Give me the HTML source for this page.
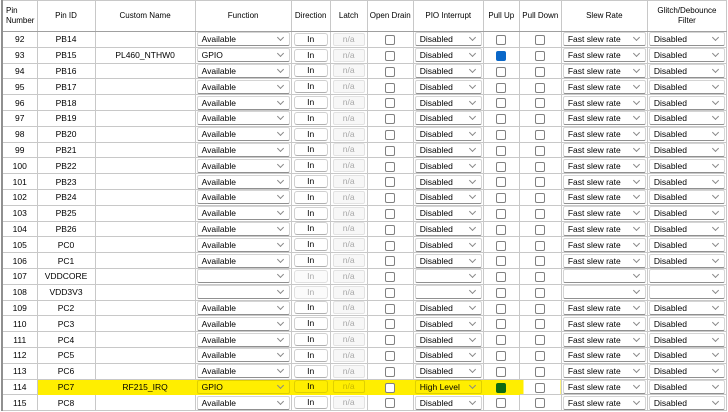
<!DOCTYPE html><html><head><style>
body{margin:0;width:728px;height:412px;overflow:hidden;background:#fff;font-family:"Liberation Sans",sans-serif;font-size:8.5px;color:#000}
table{position:absolute;left:1px;top:0;border-collapse:collapse;table-layout:fixed;width:726px;border-left:2px solid #909090}
td,th{border:1px solid #c8c8c8;padding:0;text-align:center;white-space:nowrap;overflow:hidden;line-height:12px}
td{height:14.8px}
th{font-weight:normal;height:30px;font-size:8px;line-height:10px;border-bottom:1px solid #a0a0a0}
th.l{text-align:left;padding-left:3px}
.d{display:block;margin:0 1px;height:12px;border:1px solid #d4d4d4;border-bottom-color:#909090;border-radius:2px;text-align:left;padding-left:4px;line-height:12px;position:relative;background:#fff}
.d:after{content:"";position:absolute;right:6px;top:2px;width:4px;height:4px;border-right:1px solid #888;border-bottom:1px solid #888;transform:rotate(45deg)}
.b{display:block;margin:0 2px;height:11px;line-height:11px;border:1px solid #d0d0d0;border-bottom-color:#b0b0b0;border-radius:3px;background:#fff}
.g{color:#aaa;border-color:#e0e0e0;background:#fbfbfb}
.n{display:block;margin:0 2px;height:11px;line-height:11px;border:1px solid #e2e2e2;border-radius:2px;background:#f7f7f7;color:#a8a8a8}
.c{display:inline-block;width:8px;height:8px;border:1px solid #808080;border-radius:2px;vertical-align:middle;background:#fff}
.k{background:#0a67c8;border-color:#0a67c8}
.kg{background:#0e6a12;border-color:#0e6a12}
tr.y td.h{background:#ffee00;border-top-color:#ffee00;border-bottom-color:#ffee00;border-left-color:#ffee00;border-right-color:#ffee00}
tr.y td.h .b,tr.y td.h .d,tr.y td.h .n{background:#ffee00;border-color:#e0d000}
tr.y td.h .n{color:#c8b800}
tr.y td.p{background:linear-gradient(to right,#ffee00 4px,#fff 4px)}
</style></head><body>
<table>
<colgroup><col style="width:35px"><col style="width:58px"><col style="width:100px"><col style="width:96px"><col style="width:39px"><col style="width:37px"><col style="width:46px"><col style="width:70px"><col style="width:36px"><col style="width:42px"><col style="width:86px"><col style="width:79px"></colgroup>
<tr><th class="l">Pin<br>Number</th><th>Pin ID</th><th>Custom Name</th><th>Function</th><th>Direction</th><th>Latch</th><th>Open Drain</th><th>PIO Interrupt</th><th>Pull Up</th><th>Pull Down</th><th>Slew Rate</th><th>Glitch/Debounce<br>Filter</th></tr>
<tr><td>92</td><td>PB14</td><td></td><td><span class="d">Available</span></td><td><span class="b">In</span></td><td><span class="n">n/a</span></td><td><span class="c"></span></td><td><span class="d">Disabled</span></td><td><span class="c"></span></td><td><span class="c"></span></td><td><span class="d">Fast slew rate</span></td><td><span class="d">Disabled</span></td></tr>
<tr><td>93</td><td>PB15</td><td>PL460_NTHW0</td><td><span class="d">GPIO</span></td><td><span class="b">In</span></td><td><span class="n">n/a</span></td><td><span class="c"></span></td><td><span class="d">Disabled</span></td><td><span class="c k"></span></td><td><span class="c"></span></td><td><span class="d">Fast slew rate</span></td><td><span class="d">Disabled</span></td></tr>
<tr><td>94</td><td>PB16</td><td></td><td><span class="d">Available</span></td><td><span class="b">In</span></td><td><span class="n">n/a</span></td><td><span class="c"></span></td><td><span class="d">Disabled</span></td><td><span class="c"></span></td><td><span class="c"></span></td><td><span class="d">Fast slew rate</span></td><td><span class="d">Disabled</span></td></tr>
<tr><td>95</td><td>PB17</td><td></td><td><span class="d">Available</span></td><td><span class="b">In</span></td><td><span class="n">n/a</span></td><td><span class="c"></span></td><td><span class="d">Disabled</span></td><td><span class="c"></span></td><td><span class="c"></span></td><td><span class="d">Fast slew rate</span></td><td><span class="d">Disabled</span></td></tr>
<tr><td>96</td><td>PB18</td><td></td><td><span class="d">Available</span></td><td><span class="b">In</span></td><td><span class="n">n/a</span></td><td><span class="c"></span></td><td><span class="d">Disabled</span></td><td><span class="c"></span></td><td><span class="c"></span></td><td><span class="d">Fast slew rate</span></td><td><span class="d">Disabled</span></td></tr>
<tr><td>97</td><td>PB19</td><td></td><td><span class="d">Available</span></td><td><span class="b">In</span></td><td><span class="n">n/a</span></td><td><span class="c"></span></td><td><span class="d">Disabled</span></td><td><span class="c"></span></td><td><span class="c"></span></td><td><span class="d">Fast slew rate</span></td><td><span class="d">Disabled</span></td></tr>
<tr><td>98</td><td>PB20</td><td></td><td><span class="d">Available</span></td><td><span class="b">In</span></td><td><span class="n">n/a</span></td><td><span class="c"></span></td><td><span class="d">Disabled</span></td><td><span class="c"></span></td><td><span class="c"></span></td><td><span class="d">Fast slew rate</span></td><td><span class="d">Disabled</span></td></tr>
<tr><td>99</td><td>PB21</td><td></td><td><span class="d">Available</span></td><td><span class="b">In</span></td><td><span class="n">n/a</span></td><td><span class="c"></span></td><td><span class="d">Disabled</span></td><td><span class="c"></span></td><td><span class="c"></span></td><td><span class="d">Fast slew rate</span></td><td><span class="d">Disabled</span></td></tr>
<tr><td>100</td><td>PB22</td><td></td><td><span class="d">Available</span></td><td><span class="b">In</span></td><td><span class="n">n/a</span></td><td><span class="c"></span></td><td><span class="d">Disabled</span></td><td><span class="c"></span></td><td><span class="c"></span></td><td><span class="d">Fast slew rate</span></td><td><span class="d">Disabled</span></td></tr>
<tr><td>101</td><td>PB23</td><td></td><td><span class="d">Available</span></td><td><span class="b">In</span></td><td><span class="n">n/a</span></td><td><span class="c"></span></td><td><span class="d">Disabled</span></td><td><span class="c"></span></td><td><span class="c"></span></td><td><span class="d">Fast slew rate</span></td><td><span class="d">Disabled</span></td></tr>
<tr><td>102</td><td>PB24</td><td></td><td><span class="d">Available</span></td><td><span class="b">In</span></td><td><span class="n">n/a</span></td><td><span class="c"></span></td><td><span class="d">Disabled</span></td><td><span class="c"></span></td><td><span class="c"></span></td><td><span class="d">Fast slew rate</span></td><td><span class="d">Disabled</span></td></tr>
<tr><td>103</td><td>PB25</td><td></td><td><span class="d">Available</span></td><td><span class="b">In</span></td><td><span class="n">n/a</span></td><td><span class="c"></span></td><td><span class="d">Disabled</span></td><td><span class="c"></span></td><td><span class="c"></span></td><td><span class="d">Fast slew rate</span></td><td><span class="d">Disabled</span></td></tr>
<tr><td>104</td><td>PB26</td><td></td><td><span class="d">Available</span></td><td><span class="b">In</span></td><td><span class="n">n/a</span></td><td><span class="c"></span></td><td><span class="d">Disabled</span></td><td><span class="c"></span></td><td><span class="c"></span></td><td><span class="d">Fast slew rate</span></td><td><span class="d">Disabled</span></td></tr>
<tr><td>105</td><td>PC0</td><td></td><td><span class="d">Available</span></td><td><span class="b">In</span></td><td><span class="n">n/a</span></td><td><span class="c"></span></td><td><span class="d">Disabled</span></td><td><span class="c"></span></td><td><span class="c"></span></td><td><span class="d">Fast slew rate</span></td><td><span class="d">Disabled</span></td></tr>
<tr><td>106</td><td>PC1</td><td></td><td><span class="d">Available</span></td><td><span class="b">In</span></td><td><span class="n">n/a</span></td><td><span class="c"></span></td><td><span class="d">Disabled</span></td><td><span class="c"></span></td><td><span class="c"></span></td><td><span class="d">Fast slew rate</span></td><td><span class="d">Disabled</span></td></tr>
<tr><td>107</td><td>VDDCORE</td><td></td><td><span class="d">&nbsp;</span></td><td><span class="b g">In</span></td><td><span class="n">n/a</span></td><td><span class="c"></span></td><td><span class="d">&nbsp;</span></td><td><span class="c"></span></td><td><span class="c"></span></td><td><span class="d">&nbsp;</span></td><td><span class="d">&nbsp;</span></td></tr>
<tr><td>108</td><td>VDD3V3</td><td></td><td><span class="d">&nbsp;</span></td><td><span class="b g">In</span></td><td><span class="n">n/a</span></td><td><span class="c"></span></td><td><span class="d">&nbsp;</span></td><td><span class="c"></span></td><td><span class="c"></span></td><td><span class="d">&nbsp;</span></td><td><span class="d">&nbsp;</span></td></tr>
<tr><td>109</td><td>PC2</td><td></td><td><span class="d">Available</span></td><td><span class="b">In</span></td><td><span class="n">n/a</span></td><td><span class="c"></span></td><td><span class="d">Disabled</span></td><td><span class="c"></span></td><td><span class="c"></span></td><td><span class="d">Fast slew rate</span></td><td><span class="d">Disabled</span></td></tr>
<tr><td>110</td><td>PC3</td><td></td><td><span class="d">Available</span></td><td><span class="b">In</span></td><td><span class="n">n/a</span></td><td><span class="c"></span></td><td><span class="d">Disabled</span></td><td><span class="c"></span></td><td><span class="c"></span></td><td><span class="d">Fast slew rate</span></td><td><span class="d">Disabled</span></td></tr>
<tr><td>111</td><td>PC4</td><td></td><td><span class="d">Available</span></td><td><span class="b">In</span></td><td><span class="n">n/a</span></td><td><span class="c"></span></td><td><span class="d">Disabled</span></td><td><span class="c"></span></td><td><span class="c"></span></td><td><span class="d">Fast slew rate</span></td><td><span class="d">Disabled</span></td></tr>
<tr><td>112</td><td>PC5</td><td></td><td><span class="d">Available</span></td><td><span class="b">In</span></td><td><span class="n">n/a</span></td><td><span class="c"></span></td><td><span class="d">Disabled</span></td><td><span class="c"></span></td><td><span class="c"></span></td><td><span class="d">Fast slew rate</span></td><td><span class="d">Disabled</span></td></tr>
<tr><td>113</td><td>PC6</td><td></td><td><span class="d">Available</span></td><td><span class="b">In</span></td><td><span class="n">n/a</span></td><td><span class="c"></span></td><td><span class="d">Disabled</span></td><td><span class="c"></span></td><td><span class="c"></span></td><td><span class="d">Fast slew rate</span></td><td><span class="d">Disabled</span></td></tr>
<tr class="y"><td>114</td><td class="h">PC7</td><td class="h">RF215_IRQ</td><td class="h"><span class="d">GPIO</span></td><td class="h"><span class="b">In</span></td><td class="h"><span class="n">n/a</span></td><td class="h"><span class="c"></span></td><td class="h"><span class="d">High Level</span></td><td class="h"><span class="c kg"></span></td><td class="p"><span class="c"></span></td><td><span class="d">Fast slew rate</span></td><td><span class="d">Disabled</span></td></tr>
<tr><td>115</td><td>PC8</td><td></td><td><span class="d">Available</span></td><td><span class="b">In</span></td><td><span class="n">n/a</span></td><td><span class="c"></span></td><td><span class="d">Disabled</span></td><td><span class="c"></span></td><td><span class="c"></span></td><td><span class="d">Fast slew rate</span></td><td><span class="d">Disabled</span></td></tr>
</table>
</body></html>
